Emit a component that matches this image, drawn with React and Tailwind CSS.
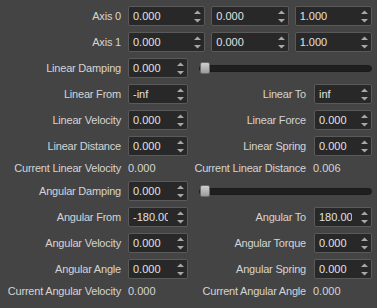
import React from "react";

const Arrows = () => (
  <svg width="7" height="13" viewBox="0 0 7 13" className="ml-[9px] mr-[3px] shrink-0">
    <polygon points="0,4 3.5,0.5 7,4" fill="#a8a8a8" />
    <polygon points="0,9 3.5,12.5 7,9" fill="#a8a8a8" />
  </svg>
);

function Spin({ value, className = "" }) {
  return (
    <div
      className={`flex h-full items-center rounded-[2px] border border-[#5a5a5a] bg-[#282828] pl-[4px] tracking-normal text-[#e2e2e2] ${className}`}
    >
      <span className="min-w-0 flex-1 overflow-hidden whitespace-nowrap">{value}</span>
      <Arrows />
    </div>
  );
}

function Label({ children }) {
  return <div className="w-[121px] shrink-0 text-right">{children}</div>;
}

function Slider() {
  return (
    <div className="relative ml-[11px] h-[7px] flex-1 rounded-full border border-[#1a1a1a] bg-[#1f1f1f]">
      <div className="absolute left-0 top-1/2 h-[12px] w-[10px] -translate-y-1/2 rounded-[2px] border border-[#6a6a6a] bg-gradient-to-b from-[#d0d0d0] to-[#9c9c9c]" />
    </div>
  );
}

function Pair({ left, right, leftValue, rightValue }) {
  return (
    <div className="flex h-[20px] items-center">
      <Label>{left}</Label>
      <Spin value={leftValue} className="ml-[7px] w-[60px]" />
      <div className="flex h-full flex-1 items-center justify-end">
        <div className="text-right">{right}</div>
        <Spin value={rightValue} className="ml-[8px] w-[58px]" />
      </div>
    </div>
  );
}

function Current({ left, leftValue, right, rightValue }) {
  return (
    <div className="flex h-[13px] items-center">
      <Label>{left}</Label>
      <div className="ml-[7px] w-[60px] tracking-normal">{leftValue}</div>
      <div className="flex flex-1 items-center justify-end">
        <div className="text-right">{right}</div>
        <div className="ml-[7px] w-[59px] tracking-normal">{rightValue}</div>
      </div>
    </div>
  );
}

export default function App() {
  return (
    <div className="flex h-[308px] w-[377px] flex-col gap-[6px] bg-[#444444] pr-[5px] pt-[6px] font-['Liberation_Sans',Arial,sans-serif] text-[11px] leading-none tracking-[-0.2px] text-[#d4d4d4]">
      {["Axis 0", "Axis 1"].map((axis) => (
        <div key={axis} className="flex h-[20px] items-center">
          <Label>{axis}</Label>
          <div className="ml-[7px] flex h-full flex-1 gap-[6px]">
            <Spin value="0.000" className="flex-1" />
            <Spin value="0.000" className="flex-1" />
            <Spin value="1.000" className="flex-1" />
          </div>
        </div>
      ))}

      <div className="flex h-[20px] items-center">
        <Label>Linear Damping</Label>
        <Spin value="0.000" className="ml-[7px] w-[60px]" />
        <Slider />
      </div>

      <Pair left="Linear From" leftValue="-inf" right="Linear To" rightValue="inf" />
      <Pair left="Linear Velocity" leftValue="0.000" right="Linear Force" rightValue="0.000" />
      <Pair left="Linear Distance" leftValue="0.000" right="Linear Spring" rightValue="0.000" />
      <Current
        left="Current Linear Velocity"
        leftValue="0.000"
        right="Current Linear Distance"
        rightValue="0.006"
      />

      <div className="flex h-[20px] items-center">
        <Label>Angular Damping</Label>
        <Spin value="0.000" className="ml-[7px] w-[60px]" />
        <Slider />
      </div>

      <Pair left="Angular From" leftValue="-180.000" right="Angular To" rightValue="180.000" />
      <Pair left="Angular Velocity" leftValue="0.000" right="Angular Torque" rightValue="0.000" />
      <Pair left="Angular Angle" leftValue="0.000" right="Angular Spring" rightValue="0.000" />
      <Current
        left="Current Angular Velocity"
        leftValue="0.000"
        right="Current Angular Angle"
        rightValue="0.000"
      />
    </div>
  );
}
